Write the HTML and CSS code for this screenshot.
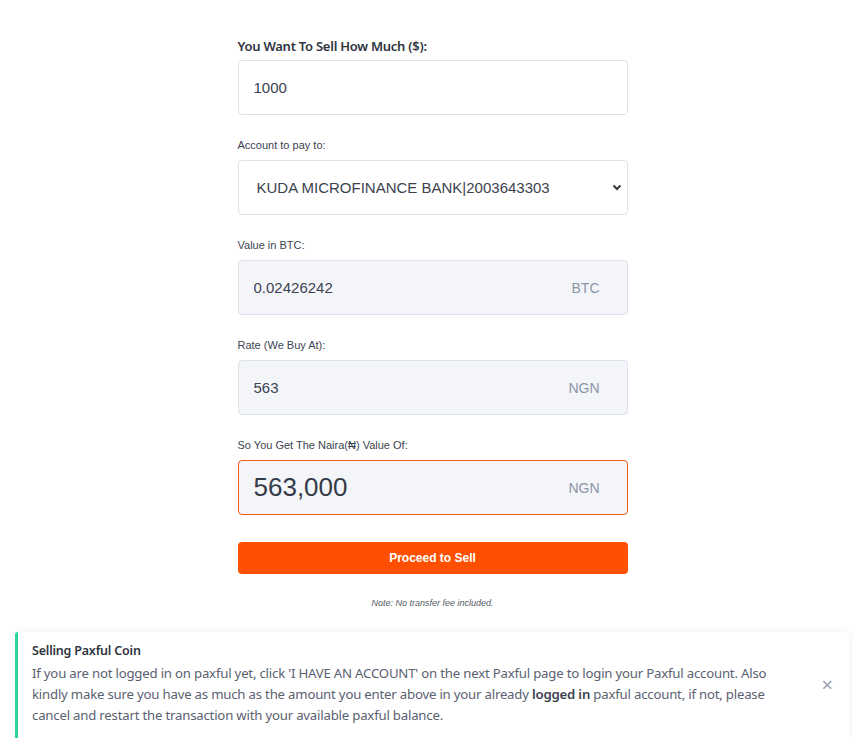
FILE: index.html
```html
<!DOCTYPE html>
<html lang="en">
<head>
  <meta charset="UTF-8" />
  <meta name="viewport" content="width=device-width, initial-scale=1.0"/>
  <title>Sell Paxful Coin</title>
  <link rel="stylesheet" href="styles.css">
</head>
<body>

  <div class="sell-form">
    <div class="field">
      <label class="label-main">You Want To Sell How Much ($):</label>
      <input type="text" class="box" value="1000">
    </div>

    <div class="field">
      <label>Account to pay to:</label>
      <div class="select-wrap">
        <select class="box select">
          <option>KUDA MICROFINANCE BANK|2003643303</option>
        </select>
        <svg class="chevron" width="10" height="7" viewBox="0 0 10 7"><path d="M1.5 1.5 5 5l3.5-3.5" fill="none" stroke="#343a40" stroke-width="2"/></svg>
      </div>
    </div>

    <div class="field">
      <label>Value in BTC:</label>
      <div class="box readonly">
        <input type="text" value="0.02426242" readonly>
        <span class="suffix">BTC</span>
      </div>
    </div>

    <div class="field">
      <label>Rate (We Buy At):</label>
      <div class="box readonly">
        <input type="text" value="563" readonly>
        <span class="suffix">NGN</span>
      </div>
    </div>

    <div class="field">
      <label>So You Get The Naira(&#8358;) Value Of:</label>
      <div class="box readonly total">
        <input type="text" value="563,000" readonly>
        <span class="suffix">NGN</span>
      </div>
    </div>

    <button class="btn-sell">Proceed to Sell</button>

    <p class="note">Note: No transfer fee included.</p>
  </div>

  <div class="notice">
    <div class="notice-body">
      <h4>Selling Paxful Coin</h4>
      <p>If you are not logged in on paxful yet, click 'I HAVE AN ACCOUNT' on the next Paxful page to login your Paxful account. Also kindly make sure you have as much as the amount you enter above in your already <strong>logged in</strong> paxful account, if not, please cancel and restart the transaction with your available paxful balance.</p>
    </div>
    <span class="close">&times;</span>
  </div>

</body>
</html>
```

FILE: styles.css
```css
body {
  margin: 0;
  background: #fff;
  font-family: "Liberation Sans", Arial, sans-serif;
  color: #3c4350;
}
.sell-form {
  width: 390px;
  margin: 0 auto;
  padding-top: 36px;
}
.field {
  margin-bottom: 22px;
}
.field label {
  display: block;
  font-size: 11px;
  line-height: 16px;
  margin-bottom: 7px;
  color: #3c4350;
}
.field .label-main {
  font-family: "Noto Sans", sans-serif;
  font-size: 13px;
  font-weight: 600;
  line-height: 20px;
  margin-bottom: 4px;
  letter-spacing: -0.25px;
  color: #2e3440;
}
.box {
  display: flex;
  align-items: center;
  box-sizing: border-box;
  width: 100%;
  height: 55px;
  border: 1px solid #dde1ea;
  border-radius: 4px;
  background: #fff;
  padding: 0 15px;
  font-family: "Liberation Sans", Arial, sans-serif;
  font-size: 15px;
  color: #3c4350;
  outline: none;
}
.select-wrap {
  position: relative;
}
.select {
  appearance: none;
  -webkit-appearance: none;
  padding-left: 18px;
}
.chevron {
  position: absolute;
  right: 6px;
  top: 24px;
}
.readonly {
  background: #f4f5f9;
}
.readonly input {
  flex: 1;
  min-width: 0;
  border: none;
  background: transparent;
  padding: 0;
  font-family: inherit;
  font-size: 15px;
  color: #3c4350;
  outline: none;
}
.suffix {
  font-size: 14px;
  color: #8b95a8;
  padding-right: 12px;
}
.total {
  border-color: #f25a1d;
}
.total input {
  font-size: 26px;
  color: #343b48;
}
.btn-sell {
  display: block;
  width: 100%;
  height: 32px;
  margin-top: 27px;
  border: none;
  border-radius: 4px;
  background: #ff4f00;
  color: #fff;
  font-family: "Liberation Sans", Arial, sans-serif;
  font-size: 12px;
  font-weight: bold;
}
.note {
  margin: 23px 0 0;
  text-align: center;
  font-size: 9px;
  line-height: 12px;
  font-style: italic;
  color: #555b66;
}
.notice {
  display: flex;
  align-items: center;
  gap: 20px;
  margin: 23px 16px 0 15px;
  padding: 11px 16px 14px 14px;
  border-left: 3px solid #2ed3a2;
  border-radius: 3px;
  background: #fff;
  box-shadow: 0 0 8px rgba(0, 0, 0, 0.07);
  font-family: "Noto Sans", sans-serif;
}
.notice-body {
  flex: 1;
  max-width: 760px;
}
.notice h4 {
  margin: 0 0 4px;
  font-size: 12.5px;
  font-weight: 600;
  line-height: 16px;
  color: #2e3440;
  letter-spacing: -0.2px;
}
.notice p {
  margin: 0;
  font-size: 13.2px;
  line-height: 21px;
  color: #5a6170;
  letter-spacing: -0.2px;
}
.notice strong {
  font-weight: 600;
  color: #3c4350;
}
.close {
  margin-left: auto;
  font-size: 20px;
  line-height: 20px;
  color: #9aa1ad;
}
```
